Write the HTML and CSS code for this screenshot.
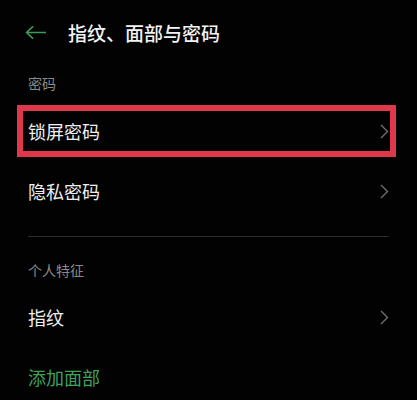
FILE: index.html
```html
<!DOCTYPE html>
<html lang="zh-CN">
<head>
    <meta charset="UTF-8">
    <meta name="viewport" content="width=device-width, initial-scale=1.0">
    <title>指纹、面部与密码</title>
    <link rel="stylesheet" href="styles.css">
</head>
<body>
    <div class="screen">
        <header class="top-bar">
            <svg class="back-icon" width="21" height="13" viewBox="0 0 21 13">
                <path d="M1.5 6.5 H20.5 M7.5 0.8 L1.5 6.5 L7.5 12.2" fill="none" stroke="#3d9a5b" stroke-width="1.6" stroke-linecap="round" stroke-linejoin="round"/>
            </svg>
            <h1>指纹、面部与密码</h1>
        </header>

        <div class="group-label first">密码</div>
        <div class="row">
            <span>锁屏密码</span>
            <svg class="chevron" width="9" height="15" viewBox="0 0 9 15"><path d="M1 1 L7.5 7.5 L1 14" fill="none" stroke="#6f6f6f" stroke-width="1.4"/></svg>
            <div class="highlight"></div>
        </div>
        <div class="row">
            <span>隐私密码</span>
            <svg class="chevron" width="9" height="15" viewBox="0 0 9 15"><path d="M1 1 L7.5 7.5 L1 14" fill="none" stroke="#6f6f6f" stroke-width="1.4"/></svg>
        </div>

        <div class="divider"></div>

        <div class="group-label second">个人特征</div>
        <div class="row">
            <span>指纹</span>
            <svg class="chevron" width="9" height="15" viewBox="0 0 9 15"><path d="M1 1 L7.5 7.5 L1 14" fill="none" stroke="#6f6f6f" stroke-width="1.4"/></svg>
        </div>
        <div class="row action">
            <span>添加面部</span>
        </div>
    </div>
</body>
</html>
```

FILE: styles.css
```css
body {
    margin: 0;
    padding: 0;
    background-color: #000;
    font-family: "Noto Sans CJK SC", "Noto Sans", sans-serif;
    color: #eeeeee;
    overflow: hidden;
}

.screen {
    width: 417px;
    height: 400px;
    background-color: #020202;
}

.top-bar {
    height: 64px;
    display: flex;
    align-items: center;
    padding-left: 25px;
    gap: 22px;
}

.back-icon {
    display: block;
}

.top-bar h1 {
    margin: 0;
    font-size: 19px;
    font-weight: 500;
    color: #f2f2f2;
    letter-spacing: 0;
}

.group-label {
    height: 34px;
    display: flex;
    align-items: center;
    padding-left: 28px;
    font-size: 14px;
    color: #8a8a8a;
}

.group-label.first {
    height: 37px;
}

.group-label.second {
    margin-top: 16px;
}

.row {
    position: relative;
    height: 60px;
    display: flex;
    align-items: center;
    justify-content: space-between;
    padding: 0 28px;
    font-size: 18px;
    color: #efefef;
}

.row.action {
    color: #3fa05e;
}

.chevron {
    display: block;
}

.highlight {
    position: absolute;
    left: 17px;
    top: 4px;
    width: 379px;
    height: 52px;
    box-sizing: border-box;
    border: 6px solid #e0384b;
}

.divider {
    height: 1px;
    margin: 15px 28px 0;
    background-color: #2c2c2c;
}
```
